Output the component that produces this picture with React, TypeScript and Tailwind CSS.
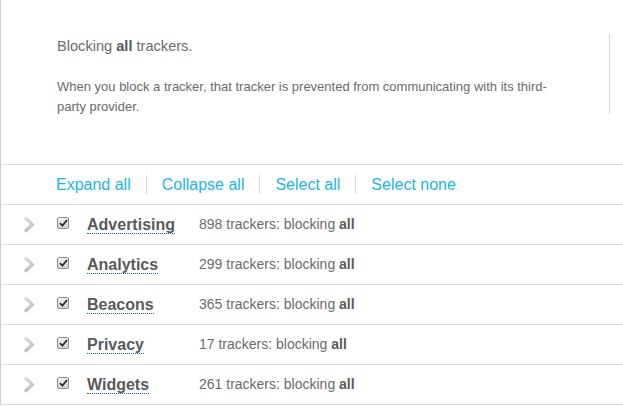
import React from 'react';

const categories = [
  { name: 'Advertising', count: 898 },
  { name: 'Analytics', count: 299 },
  { name: 'Beacons', count: 365 },
  { name: 'Privacy', count: 17 },
  { name: 'Widgets', count: 261 },
];

const actions = ['Expand all', 'Collapse all', 'Select all', 'Select none'];

function Chevron() {
  return (
    <svg width="12" height="17" viewBox="0 0 12 17" className="shrink-0">
      <defs>
        <linearGradient id="chev" x1="0" y1="0" x2="0" y2="1">
          <stop offset="0" stopColor="#dcdcdc" />
          <stop offset="1" stopColor="#bcbcbc" />
        </linearGradient>
      </defs>
      <polyline points="2,1.5 9.5,8.5 2,15.5" fill="none" stroke="url(#chev)" strokeWidth="3.2" />
    </svg>
  );
}

function Check() {
  return (
    <span className="mb-[3px] flex h-[12px] w-[12px] shrink-0 items-center justify-center rounded-[2px] border border-[#8d8d8d] bg-gradient-to-b from-[#f2f2f2] to-[#d4d4d4]">
      <svg width="9" height="8" viewBox="0 0 9 8">
        <path d="M1 4.2 L3.4 6.6 L8 1.2" fill="none" stroke="#333" strokeWidth="1.8" />
      </svg>
    </span>
  );
}

export default function App() {
  return (
    <div className="h-[406px] w-[623px] overflow-hidden bg-white font-['Liberation_Sans',Arial,sans-serif] text-[#6b6b6b]">
      <div className="border-l border-[#cfcfcf]">
        <div className="h-[165px] border-b border-[#dcdcdc] pl-[56px] pr-[13px] pt-[34px]">
          <div className="h-[80px] border-r border-[#d4d4d4] pr-[40px] pt-[2px]">
            <p className="text-[14.6px] leading-[20px]">
              Blocking <b className="text-[#5a5a5a]">all</b> trackers.
            </p>
            <p className="mt-[21px] text-[13px] leading-[20px]">
              When you block a tracker, that tracker is prevented from communicating with its third-party provider.
            </p>
          </div>
        </div>

        <div className="flex h-[40px] items-center border-b border-[#dcdcdc] pl-[40px]">
          {actions.map((a, i) => (
            <span
              key={a}
              className={`px-[15px] text-[16px] leading-[19px] text-[#1cb4ee] ${i > 0 ? 'border-l border-[#d8d8d8]' : ''}`}
            >
              {a}
            </span>
          ))}
        </div>

        {categories.map(c => (
          <div key={c.name} className="flex h-[40px] items-center border-b border-[#dcdcdc] pl-[22px]">
            <Chevron />
            <span className="ml-[22px]">
              <Check />
            </span>
            <span className="ml-[18px] w-[112px] shrink-0">
              <span className="border-b border-dotted border-[#1a5fb4] text-[16px] font-bold text-[#5a5a5a]">{c.name}</span>
            </span>
            <span className="text-[14px] text-[#6b6b6b]">
              {c.count} trackers: blocking <b className="text-[#5a5a5a]">all</b>
            </span>
          </div>
        ))}
      </div>
    </div>
  );
}
